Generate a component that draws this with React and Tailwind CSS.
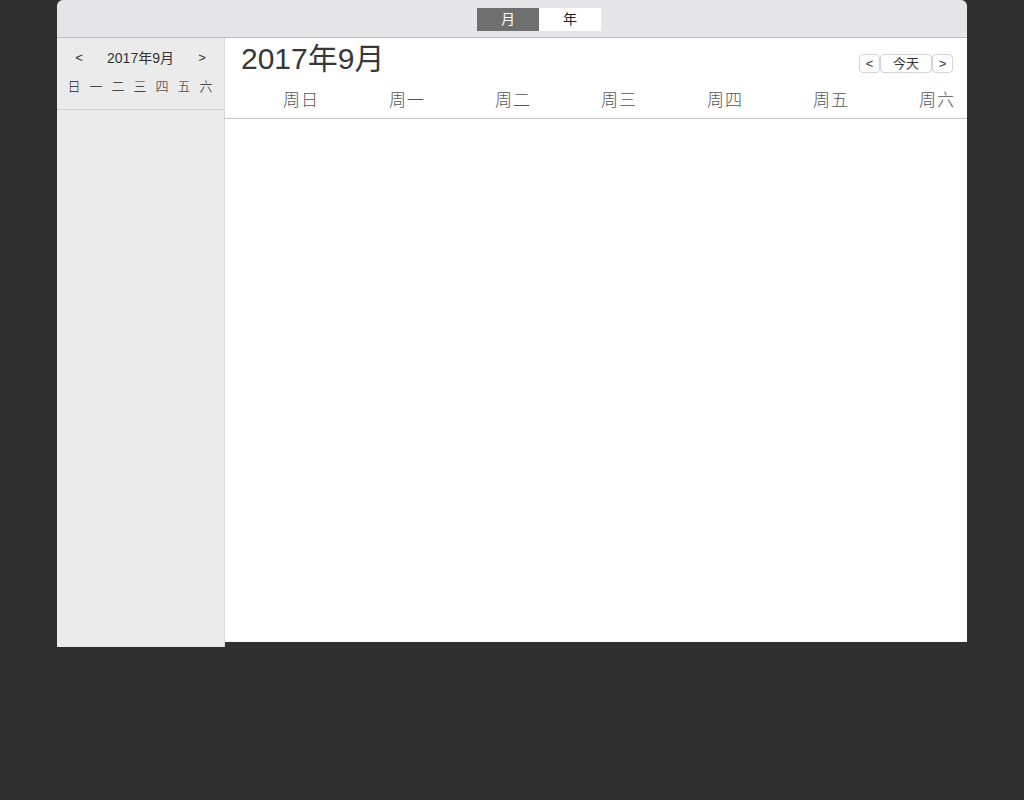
import { useState } from 'react'

const weekShort = ['日', '一', '二', '三', '四', '五', '六']
const weekLong = ['周日', '周一', '周二', '周三', '周四', '周五', '周六']

const sans = { fontFamily: '"Liberation Sans", "Noto Sans CJK SC", sans-serif' }
const cjkLight = { fontFamily: '"Noto Sans CJK SC", sans-serif', fontWeight: 300 }

function MiniCalendar() {
    return (
        <aside className="w-[168px] h-[609px] bg-[#ebebeb] border-r border-[#d6d6d6] flex flex-col">
            <div className="h-[72px] border-b border-[#cfcfcf] pt-[10px]">
                <div className="flex items-center justify-between h-[20px] px-[16px] text-[14px] text-[#333]">
                    <button className="w-[12px] text-[13px]">&lt;</button>
                    <span>2017年9月</span>
                    <button className="w-[12px] text-[13px]">&gt;</button>
                </div>
                <div className="grid grid-cols-7 w-[154px] ml-[6px] mt-[8px] text-[13px] text-[#222] text-center" style={cjkLight}>
                    {weekShort.map(d => <span key={d}>{d}</span>)}
                </div>
            </div>
        </aside>
    )
}

export default function App() {
    const [view, setView] = useState('month')

    return (
        <div className="min-h-[800px] bg-[#303030] pl-[57px]" style={sans}>
            <div className="w-[910px]">
                {/* 顶部切换 */}
                <div className="h-[38px] bg-[#e6e5e8] rounded-t-[6px] border-b border-[#bdbdbd] flex justify-center pt-[8px] pl-[54px]">
                    <div className="flex h-[23px] text-[14px]">
                        <button
                            onClick={() => setView('month')}
                            className={`w-[62px] ${view === 'month' ? 'bg-[#6f6f6f] text-white' : 'bg-white text-[#222]'}`}
                        >月</button>
                        <button
                            onClick={() => setView('year')}
                            className={`w-[62px] ${view === 'year' ? 'bg-[#6f6f6f] text-white' : 'bg-white text-[#222]'}`}
                        >年</button>
                    </div>
                </div>

                <div className="flex items-start">
                    <MiniCalendar />

                    {/* 主视图 */}
                    <main className="flex-1 h-[604px] bg-white">
                        <div className="h-[81px] border-b border-[#c8c8c8] flex flex-col">
                            <div className="flex items-start justify-between pl-[16px] pr-[14px]">
                                <h1 className="text-[30px] leading-[40px] text-[#383838] mt-[1px]">2017年9月</h1>
                                <div className="flex mt-[16px] text-[13px] text-[#333]">
                                    <button className="w-[21px] h-[19px] border border-[#d4d4d4] rounded-[4px] leading-[17px]">&lt;</button>
                                    <button className="w-[52px] h-[19px] border border-[#d4d4d4] rounded-[4px] leading-[17px]">今天</button>
                                    <button className="w-[21px] h-[19px] border border-[#d4d4d4] rounded-[4px] leading-[17px]">&gt;</button>
                                </div>
                            </div>
                            <div className="grid grid-cols-7 mt-[7px] text-[17px] text-[#555]" style={cjkLight}>
                                {weekLong.map(d => (
                                    <span key={d} className="text-right pr-[12px] tracking-[1px]">{d}</span>
                                ))}
                            </div>
                        </div>
                    </main>
                </div>
            </div>
        </div>
    )
}
